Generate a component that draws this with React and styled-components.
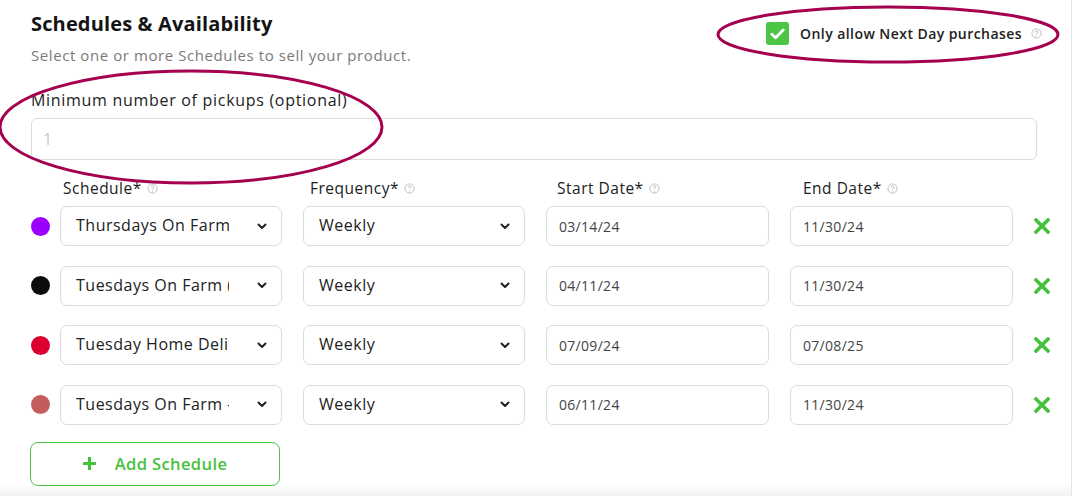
import React from "react";
import styled, { createGlobalStyle } from "styled-components";

const GlobalStyle = createGlobalStyle`
  body {
    margin: 0;
    background: #fff;
    font-family: "Open Sans", "Liberation Sans", sans-serif;
  }
`;

const schedules = [
  { color: "#9b00ff", name: "Thursdays On Farm", start: "03/14/24", end: "11/30/24" },
  { color: "#0c0c0c", name: "Tuesdays On Farm (Afternoon)", start: "04/11/24", end: "11/30/24" },
  { color: "#dc0032", name: "Tuesday Home Delivery", start: "07/09/24", end: "07/08/25" },
  { color: "#c45c5c", name: "Tuesdays On Farm - Evening", start: "06/11/24", end: "11/30/24" },
];

const Help = () => (
  <HelpIcon viewBox="0 0 12 12">
    <circle cx="6" cy="6" r="5" fill="none" stroke="currentColor" strokeWidth="0.9" />
    <path d="M4.6 4.7a1.4 1.4 0 1 1 1.9 1.3c-.4.2-.5.4-.5.9" fill="none" stroke="currentColor" strokeWidth="0.9" />
    <circle cx="6" cy="8.6" r="0.55" fill="currentColor" />
  </HelpIcon>
);

const Chevron = () => (
  <svg width="10" height="7" viewBox="0 0 10 7">
    <path d="M1.5 1.5 5 5l3.5-3.5" fill="none" stroke="#222" strokeWidth="2" strokeLinecap="round" strokeLinejoin="round" />
  </svg>
);

const RemoveIcon = () => (
  <svg width="16" height="16" viewBox="0 0 16 16">
    <path d="M2 2l12 12M14 2 2 14" stroke="#45c23b" strokeWidth="3.6" strokeLinecap="square" />
  </svg>
);

export default function App() {
  return (
    <>
      <GlobalStyle />
      <Panel>
        <HeaderRow>
          <div>
            <Title>Schedules &amp; Availability</Title>
            <Subtitle>Select one or more Schedules to sell your product.</Subtitle>
          </div>
          <CheckRow>
            <CheckBox>
              <svg width="15" height="12" viewBox="0 0 15 12">
                <path d="M1.8 6.2 5.6 9.8 13.2 2" fill="none" stroke="#fff" strokeWidth="2.8" strokeLinecap="round" strokeLinejoin="round" />
              </svg>
            </CheckBox>
            <CheckLabel>Only allow Next Day purchases</CheckLabel>
            <Help />
          </CheckRow>
        </HeaderRow>

        <FieldLabel>Minimum number of pickups (optional)</FieldLabel>
        <TextInput placeholder="1" />

        <Grid>
          <HeadRow>
            <DotSpace />
            <ColHead $inset={3}>Schedule* <Help /></ColHead>
            <ColHead $inset={7}>Frequency* <Help /></ColHead>
            <ColHead $inset={11}>Start Date* <Help /></ColHead>
            <ColHead $inset={14}>End Date* <Help /></ColHead>
          </HeadRow>
          {schedules.map((s) => (
            <Row key={s.start + s.name}>
              <Dot $color={s.color} />
              <SelectBox>
                <SelectText>{s.name}</SelectText>
                <Chevron />
              </SelectBox>
              <SelectBox>
                <SelectText>Weekly</SelectText>
                <Chevron />
              </SelectBox>
              <DateBox>{s.start}</DateBox>
              <DateBox>{s.end}</DateBox>
              <RemoveButton>
                <RemoveIcon />
              </RemoveButton>
            </Row>
          ))}
        </Grid>

        <AddButton>
          <svg width="13" height="13" viewBox="0 0 13 13">
            <path d="M6.5 0v13M0 6.5h13" stroke="#45c23b" strokeWidth="3" />
          </svg>
          Add Schedule
        </AddButton>

        <Annotations viewBox="0 0 1074 496">
          <ellipse cx="888" cy="34.5" rx="170" ry="27.5" fill="none" stroke="#a5004e" strokeWidth="3" />
          <ellipse cx="191" cy="127" rx="191" ry="56" fill="none" stroke="#a5004e" strokeWidth="3" />
        </Annotations>
        <BottomShade />
      </Panel>
    </>
  );
}

const Panel = styled.div`
  position: relative;
  box-sizing: border-box;
  width: 1072px;
  height: 496px;
  padding: 12px 20px 0 31px;
  border-right: 1px solid #e4e4e4;
  overflow: hidden;
  color: #222;
`;

const HeaderRow = styled.div`
  display: flex;
  justify-content: space-between;
  align-items: flex-start;
  padding-right: 9px;
`;

const Title = styled.h2`
  margin: 0;
  font-size: 20px;
  line-height: 24px;
  font-weight: 700;
  letter-spacing: 0.15px;
  color: #141414;
`;

const Subtitle = styled.p`
  margin: 9px 0 0;
  font-size: 15px;
  line-height: 20px;
  letter-spacing: 0.58px;
  color: #7a7a7a;
`;

const CheckRow = styled.div`
  display: flex;
  align-items: center;
  margin-top: 10px;
`;

const CheckBox = styled.span`
  display: flex;
  align-items: center;
  justify-content: center;
  width: 23px;
  height: 23px;
  border-radius: 3px;
  background: #4cc444;
  margin-right: 11px;
`;

const CheckLabel = styled.span`
  font-size: 14px;
  font-weight: 600;
  letter-spacing: 0.44px;
  color: #222;
  margin-right: 9px;
`;

const HelpIcon = styled.svg`
  width: 11px;
  height: 11px;
  color: #b0b0b0;
  vertical-align: middle;
  flex-shrink: 0;
`;

const FieldLabel = styled.div`
  margin-top: 25px;
  font-size: 16px;
  line-height: 20px;
  letter-spacing: 0.7px;
  color: #222;
`;

const TextInput = styled.input`
  display: block;
  box-sizing: border-box;
  width: calc(100% - 14px);
  height: 42px;
  margin-top: 8px;
  padding: 0 11px;
  border: 1px solid #dcdcdc;
  border-radius: 6px;
  font-family: inherit;
  font-size: 16px;
  &::placeholder {
    color: #c8c8c8;
  }
`;

const Grid = styled.div`
  display: flex;
  flex-direction: column;
  gap: 19.5px;
  margin-top: 18px;
`;

const HeadRow = styled.div`
  display: flex;
  gap: 21px;
  height: 20px;
  margin-bottom: -11.5px;
`;

const DotSpace = styled.span`
  width: 19px;
  margin-right: -11px;
  flex-shrink: 0;
`;

const ColHead = styled.div`
  box-sizing: border-box;
  flex-shrink: 0;
  width: 222px;
  padding-left: ${(p) => p.$inset}px;
  font-size: 15.5px;
  line-height: 20px;
  letter-spacing: 0.5px;
  color: #222;
  display: flex;
  align-items: center;
  gap: 5px;
`;

const Row = styled.div`
  display: flex;
  align-items: center;
  gap: 21px;
  height: 40px;
`;

const Dot = styled.span`
  width: 19px;
  height: 19px;
  border-radius: 50%;
  background: ${(p) => p.$color};
  margin-right: -11px;
  flex-shrink: 0;
`;

const SelectBox = styled.div`
  box-sizing: border-box;
  flex-shrink: 0;
  width: 222px;
  height: 40px;
  display: flex;
  align-items: center;
  justify-content: space-between;
  padding: 0 14px 0 15px;
  border: 1px solid #dcdcdc;
  border-radius: 7px;
`;

const SelectText = styled.span`
  width: 153px;
  overflow: hidden;
  white-space: nowrap;
  font-size: 16px;
  line-height: 20px;
  margin-top: -2px;
  letter-spacing: 0.5px;
  color: #222;
`;

const DateBox = styled.div`
  box-sizing: border-box;
  flex-shrink: 0;
  width: 223px;
  height: 40px;
  display: flex;
  align-items: center;
  padding: 0 12px;
  border: 1px solid #dcdcdc;
  border-radius: 7px;
  font-size: 14px;
  letter-spacing: 0.3px;
  color: #444;
`;

const RemoveButton = styled.span`
  display: flex;
  align-items: center;
  flex-shrink: 0;
`;

const AddButton = styled.button`
  display: flex;
  align-items: center;
  justify-content: center;
  gap: 19px;
  box-sizing: border-box;
  width: 250px;
  height: 44px;
  margin-top: 17px;
  margin-left: -1px;
  padding-right: 6px;
  background: #fff;
  border: 1px solid #4cc444;
  border-radius: 8px;
  font-family: inherit;
  font-size: 16.5px;
  font-weight: 600;
  letter-spacing: 0.4px;
  color: #45c23b;
`;

const Annotations = styled.svg`
  position: absolute;
  left: 0;
  top: 0;
  width: 1074px;
  height: 496px;
  pointer-events: none;
`;

const BottomShade = styled.div`
  position: absolute;
  left: 0;
  right: 0;
  bottom: 0;
  height: 12px;
  background: linear-gradient(to bottom, rgba(0, 0, 0, 0), rgba(0, 0, 0, 0.05));
`;
